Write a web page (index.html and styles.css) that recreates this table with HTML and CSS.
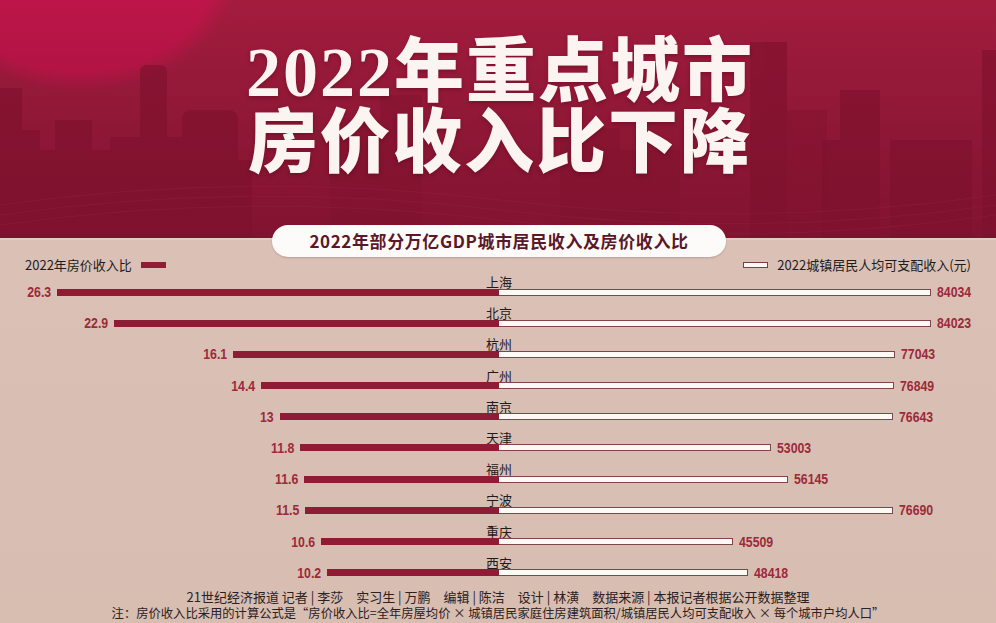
FILE: index.html
```html
<!DOCTYPE html>
<html lang="zh-CN">
<head>
<meta charset="utf-8">
<title>2022年重点城市房价收入比下降</title>
<link rel="stylesheet" href="styles.css">
</head>
<body>
<div class="poster">
  <header class="hero">
    <svg class="skyline" viewBox="0 0 996 240" preserveAspectRatio="none" aria-hidden="true">
      <defs>
        <linearGradient id="bgfade" x1="0" y1="0" x2="0" y2="1">
          <stop offset="0" stop-color="#7a102c" stop-opacity="0"/>
          <stop offset="1" stop-color="#7a102c" stop-opacity="0.55"/>
        </linearGradient>
        <radialGradient id="glow" cx="0.5" cy="0.5" r="0.5">
          <stop offset="0.85" stop-color="#bd1549"/>
          <stop offset="1" stop-color="#bd1549" stop-opacity="0"/>
        </radialGradient>
      </defs>
      <ellipse cx="80" cy="-40" rx="162" ry="132" fill="url(#glow)"/>
      <g fill="#86142f" opacity="0.55">
        <rect x="330" y="120" width="50" height="120"/>
        <rect x="380" y="95" width="42" height="145"/>
        <rect x="560" y="128" width="60" height="112"/>
        <rect x="620" y="150" width="60" height="90"/>
        <rect x="787" y="110" width="40" height="130"/>
      </g>
      <g fill="#82122e" opacity="0.7">
        <rect x="0" y="88" width="22" height="152"/>
        <rect x="22" y="130" width="18" height="110"/>
        <rect x="40" y="150" width="15" height="90"/>
        <rect x="55" y="120" width="37" height="120"/>
        <rect x="92" y="150" width="20" height="90"/>
        <rect x="110" y="137" width="72" height="103"/>
        <path d="M140 240 V72 Q140 65 147 65 H160 Q167 65 167 72 V240 Z"/>
        <path d="M182 240 V120 Q182 110 192 110 H228 Q238 110 238 120 V240 Z"/>
        <rect x="238" y="160" width="14" height="80"/>
        <rect x="750" y="42" width="37" height="198"/>
        <rect x="840" y="90" width="40" height="150"/>
        <rect x="822" y="140" width="58" height="100"/>
        <rect x="890" y="140" width="82" height="100"/>
        <rect x="982" y="50" width="14" height="190"/>
      </g>
      <rect x="0" y="0" width="996" height="240" fill="url(#bgfade)"/>
      <g fill="none" stroke="#a8254a" stroke-opacity="0.25" stroke-width="1">
        <path d="M0 205 Q250 170 500 200 T996 195"/>
        <path d="M0 215 Q250 180 500 210 T996 205"/>
        <path d="M0 225 Q250 190 500 220 T996 215"/>
      </g>
    </svg>
    <h1 class="title"><span class="t-line">2022年重点城市</span><span class="t-line">房价收入比下降</span></h1>
  </header>

  <div class="subtitle-wrap">
    <div class="pill">2022年部分万亿GDP城市居民收入及房价收入比</div>
  </div>

  <div class="legend">
    <div class="leg-item">2022年房价收入比<span class="sw sw-red"></span></div>
    <div class="leg-item"><span class="sw sw-white"></span>2022城镇居民人均可支配收入(元)</div>
  </div>

  <div class="chart">
    <div class="row">
      <div class="city">上海</div>
      <div class="bars">
        <div class="side left"><span class="val">26.3</span><span class="bar red" style="width:442px"></span></div>
        <div class="side right"><span class="bar white" style="width:432px"></span><span class="val">84034</span></div>
      </div>
    </div>
    <div class="row">
      <div class="city">北京</div>
      <div class="bars">
        <div class="side left"><span class="val">22.9</span><span class="bar red" style="width:385px"></span></div>
        <div class="side right"><span class="bar white" style="width:432px"></span><span class="val">84023</span></div>
      </div>
    </div>
    <div class="row">
      <div class="city">杭州</div>
      <div class="bars">
        <div class="side left"><span class="val">16.1</span><span class="bar red" style="width:266px"></span></div>
        <div class="side right"><span class="bar white" style="width:396px"></span><span class="val">77043</span></div>
      </div>
    </div>
    <div class="row">
      <div class="city">广州</div>
      <div class="bars">
        <div class="side left"><span class="val">14.4</span><span class="bar red" style="width:238px"></span></div>
        <div class="side right"><span class="bar white" style="width:395px"></span><span class="val">76849</span></div>
      </div>
    </div>
    <div class="row">
      <div class="city">南京</div>
      <div class="bars">
        <div class="side left"><span class="val">13</span><span class="bar red" style="width:219px"></span></div>
        <div class="side right"><span class="bar white" style="width:394px"></span><span class="val">76643</span></div>
      </div>
    </div>
    <div class="row">
      <div class="city">天津</div>
      <div class="bars">
        <div class="side left"><span class="val">11.8</span><span class="bar red" style="width:199px"></span></div>
        <div class="side right"><span class="bar white" style="width:272px"></span><span class="val">53003</span></div>
      </div>
    </div>
    <div class="row">
      <div class="city">福州</div>
      <div class="bars">
        <div class="side left"><span class="val">11.6</span><span class="bar red" style="width:195px"></span></div>
        <div class="side right"><span class="bar white" style="width:289px"></span><span class="val">56145</span></div>
      </div>
    </div>
    <div class="row">
      <div class="city">宁波</div>
      <div class="bars">
        <div class="side left"><span class="val">11.5</span><span class="bar red" style="width:194px"></span></div>
        <div class="side right"><span class="bar white" style="width:394px"></span><span class="val">76690</span></div>
      </div>
    </div>
    <div class="row">
      <div class="city">重庆</div>
      <div class="bars">
        <div class="side left"><span class="val">10.6</span><span class="bar red" style="width:178px"></span></div>
        <div class="side right"><span class="bar white" style="width:234px"></span><span class="val">45509</span></div>
      </div>
    </div>
    <div class="row">
      <div class="city">西安</div>
      <div class="bars">
        <div class="side left"><span class="val">10.2</span><span class="bar red" style="width:172px"></span></div>
        <div class="side right"><span class="bar white" style="width:249px"></span><span class="val">48418</span></div>
      </div>
    </div>
  </div>

  <footer class="credits">
    <p class="credit-line">21世纪经济报道 记者 | 李莎&emsp;实习生 | 万鹏&emsp;编辑 | 陈洁&emsp;设计 | 林潢&emsp;数据来源 | 本报记者根据公开数据整理</p>
    <p class="credit-line note">注：房价收入比采用的计算公式是“房价收入比=全年房屋均价 × 城镇居民家庭住房建筑面积/城镇居民人均可支配收入 × 每个城市户均人口”</p>
  </footer>
</div>
</body>
</html>
```

FILE: styles.css
```css
* { box-sizing: border-box; }

html, body {
  margin: 0;
  padding: 0;
}

body {
  width: 996px;
  height: 623px;
  overflow: hidden;
  background: #d9bfb3;
  font-family: "Noto Sans CJK SC", "Noto Sans", sans-serif;
  color: #231c1e;
}

.poster {
  width: 996px;
  height: 623px;
  background: linear-gradient(180deg, #dcc3b8 0%, #d8bdb1 100%);
}

.hero {
  position: relative;
  height: 240px;
  background: linear-gradient(180deg, #a31c3e 0%, #9a1b3b 45%, #8b1735 100%);
  border-bottom: 2px solid #e6cbc2;
  overflow: hidden;
}

.skyline {
  position: absolute;
  left: 0;
  top: 0;
  width: 996px;
  height: 240px;
}

.title {
  position: relative;
  margin: 0;
  padding-top: 37px;
  display: flex;
  flex-direction: column;
  align-items: center;
  font-family: "Liberation Serif", "Noto Sans CJK SC", serif;
  font-weight: 900;
  font-size: 70px;
  line-height: 71px;
  letter-spacing: 2px;
  color: #fcf4f0;
  text-shadow: 0 2px 4px rgba(70, 0, 20, 0.35);
}

.t-line {
  display: block;
  padding-left: 4px;
}

.subtitle-wrap {
  display: flex;
  justify-content: center;
  margin-top: -15px;
  position: relative;
}

.pill {
  width: 454px;
  height: 32px;
  margin-left: 2px;
  border-radius: 16px;
  background: #fdfbfa;
  color: #5a1828;
  font-weight: 700;
  font-size: 17px;
  line-height: 32px;
  text-align: center;
  letter-spacing: 0.6px;
  box-shadow: 0 1px 2px rgba(90, 20, 40, 0.2);
}

.legend {
  display: flex;
  justify-content: space-between;
  align-items: center;
  height: 16px;
  padding: 0 25px;
  font-size: 13px;
  line-height: 16px;
  color: #231c1e;
}

.leg-item {
  display: flex;
  align-items: center;
}

.sw {
  display: inline-block;
  width: 25px;
  height: 6px;
}

.sw-red {
  background: #8e1d35;
  margin-left: 9px;
}

.sw-white {
  background: #fffaf6;
  border: 1px solid #7e3c44;
  margin-right: 9px;
}

.chart {
  padding-top: 3px;
}

.row {
  margin-bottom: 8.2px;
}

.city {
  height: 13px;
  line-height: 11px;
  font-size: 13px;
  text-align: center;
  padding-left: 2px;
  color: #1f1a1b;
}

.bars {
  display: grid;
  grid-template-columns: 499px 1fr;
  height: 14px;
  margin-top: -4px;
}

.side {
  display: flex;
  align-items: center;
}

.side.left {
  justify-content: flex-end;
}

.val {
  display: inline-block;
  font-family: "Liberation Sans", Arial, sans-serif;
  font-weight: 700;
  font-size: 15px;
  color: #9c2a3b;
  line-height: 14px;
  transform: scaleX(0.82);
}

.left .val {
  margin-right: 6px;
  transform-origin: right center;
}

.right .val {
  margin-left: 6px;
  transform-origin: left center;
}

.bar {
  display: block;
  height: 7px;
}

.bar.red {
  background: #8d1c34;
}

.bar.white {
  background: #fffaf6;
  border: 1px solid #83434a;
  border-left: none;
}

.credits {
  margin-top: 0;
  text-align: center;
  font-size: 13px;
  line-height: 17px;
  color: #2a2123;
}

.credit-line {
  margin: 0;
  white-space: nowrap;
}

.credit-line.note {
  font-size: 12.3px;
}
```
